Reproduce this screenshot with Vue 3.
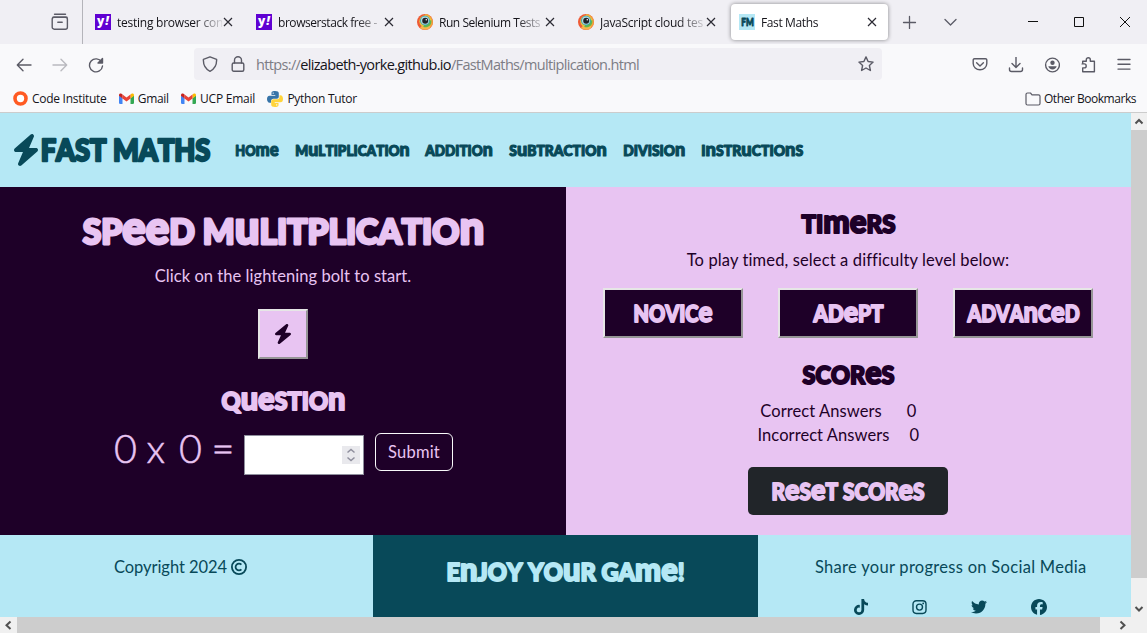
<script setup>
import { h } from 'vue'

// Spreads the letters of a label over the given width.
const vFit = {
  mounted(el, { value }) {
    const n = el.textContent.length
    const w = el.getBoundingClientRect().width
    el.style.letterSpacing = `${(value - w) / n}px`
  }
}

// Unicase headline: e, n, m and u keep their small shapes at capital height.
const Display = (props) => {
  const parts = props.text.match(/[enmu]+|[^enmu]+/g)
  const bleed = props.cap * 0.055
  return h(
    'svg',
    { class: 'display', width: props.w, height: props.cap, viewBox: `0 0 ${props.w} ${props.cap}` },
    [
      h(
        'text',
        {
          x: bleed / 2,
          y: props.cap - bleed / 2,
          textLength: props.w - bleed,
          lengthAdjust: 'spacingAndGlyphs',
          'stroke-width': props.cap * 0.105
        },
        parts.map((p) => {
          const small = /^[enmu]/.test(p)
          return h('tspan', { 'font-size': props.cap / (small ? 0.59 : 0.77) }, small ? p : p.toUpperCase())
        })
      )
    ]
  )
}
Display.props = ['text', 'w', 'cap']

const tabs = [
  { icon: 'yahoo', text: 'testing browser con', w: 106 },
  { icon: 'yahoo', text: 'browserstack free -', w: 99 },
  { icon: 'eye', text: 'Run Selenium Tests', w: 101 },
  { icon: 'eye', text: 'JavaScript cloud tes', w: 103 },
  { icon: 'fm', text: 'Fast Maths', w: 57, active: true }
]
const bookmarks = [
  { icon: 'code', text: 'Code Institute', w: 74.5 },
  { icon: 'gmail', text: 'Gmail', w: 31 },
  { icon: 'gmail', text: 'UCP Email', w: 55 },
  { icon: 'python', text: 'Python Tutor', w: 69.5 }
]
const nav = [
  { text: 'Home', w: 44 },
  { text: 'Multiplication', w: 115 },
  { text: 'Addition', w: 68 },
  { text: 'Subtraction', w: 98 },
  { text: 'Division', w: 62.5 },
  { text: 'Instructions', w: 102.5 }
]
const levels = [
  { text: 'Novice', w: 80 },
  { text: 'Adept', w: 71 },
  { text: 'Advanced', w: 113 }
]
const bolt =
  'M349.4 44.6c5.9-13.7 1.5-29.7-10.6-38.5s-28.6-8-39.9 1.8l-256 224c-10 8.8-13.6 22.9-8.9 35.3S50.7 288 64 288H175.5L98.6 467.4c-5.9 13.7-1.5 29.7 10.6 38.5s28.6 8 39.9-1.8l256-224c10-8.8 13.6-22.9 8.9-35.3s-16.6-20.7-30-20.7H272.5L349.4 44.6z'
</script>

<template>
  <div class="window">
    <div class="tabbar">
      <div class="view">
        <svg width="18" height="18" viewBox="0 0 18 18" class="line">
          <path d="M3.5 1.2h11" /><rect x="1.2" y="4.2" width="15.2" height="12" rx="2" /><path d="M2 4.2h14M6.800 9.200h4.400" />
        </svg>
      </div>
      <div v-for="(t, i) in tabs" :key="i" class="tab" :class="{ active: t.active }">
        <span v-if="t.icon === 'yahoo'" class="fav yahoo">y<i>!</i></span>
        <svg v-else-if="t.icon === 'eye'" class="fav" viewBox="0 0 16 16">
          <circle cx="8" cy="8" r="8" fill="#ef5a35" /><path d="M8 0a8 8 0 0 1 6 13L8 8z" fill="#f2a33a" /><path d="M3 14a8 8 0 0 0 11-1L8 8z" fill="#f7b64c" />
          <circle cx="8.3" cy="7.3" r="6" fill="#e5c341" /><path d="M8.3 7.3l6-1a6 6 0 0 1-8 6.6z" fill="#62b64d" />
          <circle cx="8" cy="6.6" r="4.9" fill="#38a5b4" /><circle cx="8" cy="6.6" r="4" fill="#b7dce2" /><circle cx="8.2" cy="6.8" r="3" fill="#20242a" /><circle cx="9.3" cy="5.8" r=".8" fill="#fff" />
        </svg>
        <span v-else class="fav fm"><Display text="FM" :w="13" :cap="9" /></span>
        <span class="tabtext"><span v-fit="t.w" class="fit">{{ t.text }}</span></span>
        <svg class="close" width="10" height="10" viewBox="0 0 10 10"><path d="M1 1l8 8M9 1l-8 8" /></svg>
      </div>
      <svg class="tabtools line" width="56" height="14" viewBox="0 0 56 14"><path d="M1.500 7.500h12M7.500 1.500v12M43 4.500l5.500 5.500 5.500-5.500" /></svg>
      <svg class="controls" width="104" height="14" viewBox="0 0 104 14"><path d="M1 6.500h10M47.500 2.500h9v9h-9zM93 2l10 10M103 2l-10 10" /></svg>
    </div>

    <div class="toolbar">
      <svg class="line" width="16" height="16" viewBox="0 0 16 16"><path d="M15 8H1.500M7 2.300L1.300 8 7 13.700" /></svg>
      <svg class="line dim" width="16" height="16" viewBox="0 0 16 16"><path d="M1 8h13.500M9 2.300L14.700 8 9 13.700" /></svg>
      <svg class="line" width="16" height="16" viewBox="0 0 16 16"><path d="M13.600 5A6.500 6.500 0 1 0 14.500 9" /><path d="M14.500 1.500v4.500H10z" fill="#5b5b66" /></svg>
      <div class="url">
        <svg class="line" width="16" height="16" viewBox="0 0 16 16"><path d="M8 .8l6.600 2.500c.3 5.600-1.700 9.600-6.600 12C3.100 12.900 1.100 8.900 1.400 3.300z" /></svg>
        <svg class="line" width="14" height="16" viewBox="0 0 14 16"><rect x="1.200" y="7" width="11.600" height="8.300" rx="1.500" /><path d="M3.500 7V4.200a3.500 3.500 0 0 1 7 0V7" /></svg>
        <span v-fit="383" class="fit address">https://<b>elizabeth-yorke.github.io</b>/FastMaths/multiplication.html</span>
        <svg class="line star" width="16" height="16" viewBox="0 0 16 16"><path d="M8 .9l2.100 4.600 5 .6-3.700 3.400 1 5L8 12l-4.400 2.500 1-5L.9 6.100l5-.6z" /></svg>
      </div>
      <div class="actions">
        <svg class="line" width="16" height="16" viewBox="0 0 16 16"><path d="M2.500 1.700h11a1.300 1.300 0 0 1 1.300 1.300V6.500a6.800 6.300 0 0 1-13.600 0V3a1.300 1.300 0 0 1 1.300-1.300zM4.600 5.800L8 9.100l3.400-3.300" /></svg>
        <svg class="line" width="16" height="16" viewBox="0 0 16 16"><path d="M8 0v10.300M4 6.500l4 4 4-4M1.500 11v1.500a2 2 0 0 0 2 2h9a2 2 0 0 0 2-2V11" /></svg>
        <svg class="line" width="16" height="16" viewBox="0 0 16 16"><circle cx="8.500" cy="8" r="6.900" /><circle cx="8.500" cy="5.700" r="2.200" class="solid" /><path d="M4.300 9.300h8.400c-.4 2-2.200 3.100-4.200 3.100s-3.800-1.100-4.200-3.100z" class="solid" /></svg>
        <svg class="line" width="16" height="16" viewBox="0 0 16 16"><path d="M2.700 6V4.300h3.600V2.700a2 2 0 0 1 4 0v1.600h4.100v10.400H2.700v-3.800h1.500a2 2 0 0 0 0-4H2.100" /></svg>
        <svg class="line" width="16" height="16" viewBox="0 0 16 16"><path d="M2 2.500h12M2 7.300h12M2 12.100h12" /></svg>
      </div>
    </div>

    <div class="bookmarks">
      <div v-for="b in bookmarks" :key="b.text" class="bookmark">
        <svg v-if="b.icon === 'code'" width="15" height="15" viewBox="0 0 15 15"><circle cx="7.500" cy="7.500" r="5.500" fill="#fff" stroke="#ff5a22" stroke-width="3.600" /></svg>
        <svg v-else-if="b.icon === 'gmail'" width="15" height="12" viewBox="0 0 15 12">
          <path d="M0 2.500l3.500 2.600V11H1.200A1.200 1.200 0 0 1 0 9.800z" fill="#4285f4" /><path d="M11.500 5.100L15 2.500v7.300a1.200 1.200 0 0 1-1.200 1.200h-2.300z" fill="#34a853" />
          <path d="M11.500 1.500l1-.7c1.200-.8 2.500 0 2.500 1.200v.8l-3.500 2.600z" fill="#fbbc04" /><path d="M3.500 5.500v-4l4 3 4-3v4l-4 3z" fill="#ea4335" /><path d="M0 2.800V2C0 .800 1.300 0 2.500.800l1 .7v4z" fill="#c5221f" />
        </svg>
        <svg v-else width="16" height="16" viewBox="0 0 16 16">
          <path d="M8 0C4.500 0 4.500 1 4.500 2.500V4H8.300v.7H2.500C.8 4.700 0 6 0 8s1 3.700 2.500 3.700H4V10c0-1.300 1-2.300 2.300-2.300h3.500c1.200 0 2-.9 2-2V2.500C11.800.7 10.500 0 8 0z" fill="#3774a8" />
          <path d="M8 16c3.500 0 3.500-1 3.500-2.500V12H7.700v-.7h5.800c1.700 0 2.500-1.300 2.500-3.300s-1-3.700-2.500-3.700H12.500V6c0 1.300-1 2.300-2.300 2.300H6.500c-1.200 0-2.300.9-2.300 2v3.200C4.200 15.300 5.500 16 8 16z" fill="#ffd43b" />
          <circle cx="6.200" cy="2.100" r=".7" fill="#fff" /><circle cx="9.700" cy="13.900" r=".7" fill="#fff" />
        </svg>
        <span v-fit="b.w" class="fit">{{ b.text }}</span>
      </div>
      <div class="bookmark other">
        <svg class="line thin" width="16" height="14" viewBox="0 0 16 14"><path d="M1 11.500v-9A1.500 1.500 0 0 1 2.500 1h3L7 2.800h6.500A1.500 1.500 0 0 1 15 4.300v7.200a1.500 1.500 0 0 1-1.500 1.500h-11A1.500 1.500 0 0 1 1 11.500z" /></svg>
        <span v-fit="92" class="fit">Other Bookmarks</span>
      </div>
    </div>

    <div class="viewport">
      <div class="page">
        <header>
          <svg class="logo" width="24" height="32" viewBox="32 0 384 512" preserveAspectRatio="none"><path :d="bolt" /></svg>
          <Display text="FAST MATHS" :w="171" :cap="23" />
          <nav><a v-for="n in nav" :key="n.text"><Display :text="n.text" :w="n.w" :cap="11" /></a></nav>
        </header>

        <main>
          <section class="game">
            <h1><Display text="Speed Mulitplication" :w="403" :cap="27" /></h1>
            <p><span v-fit="256.500" class="fit">Click on the lightening bolt to start.</span></p>
            <button class="start"><svg width="16" height="20" viewBox="32 0 384 512" preserveAspectRatio="none"><path :d="bolt" /></svg></button>
            <h2><Display text="Question" :w="125" :cap="19.500" /></h2>
            <div class="answer">
              <span class="sum"><i>0</i><i>x</i><i>0</i><i>=</i></span>
              <div class="input">
                <span class="spin"><svg width="10" height="14" viewBox="0 0 10 14"><path d="M1.500 4.500L5 1.500l3.500 3M1.500 9.500l3.500 3 3.500-3" /></svg></span>
              </div>
              <button class="submit"><span v-fit="52" class="fit">Submit</span></button>
            </div>
          </section>

          <section class="side">
            <h2><Display text="Timers" :w="95" :cap="19.500" /></h2>
            <p><span v-fit="322" class="fit">To play timed, select a difficulty level below:</span></p>
            <div class="levels">
              <button v-for="l in levels" :key="l.text"><Display :text="l.text" :w="l.w" :cap="17" /></button>
            </div>
            <h2 class="scores"><Display text="Scores" :w="93" :cap="19.500" /></h2>
            <div class="score first"><span v-fit="121.500" class="fit">Correct Answers</span><span class="wide">0</span></div>
            <div class="score"><span v-fit="132" class="fit">Incorrect Answers</span><span class="narrow">0</span></div>
            <button class="reset"><Display text="Reset Scores" :w="154" :cap="17" /></button>
          </section>
        </main>

        <footer>
          <div class="copy">
            <span v-fit="113" class="fit">Copyright 2024</span>
            <svg width="16" height="16" viewBox="0 0 16 16"><path d="M10.400 5.600a3.400 3.400 0 1 0 0 4.800" /><circle cx="8" cy="8" r="7.100" /></svg>
          </div>
          <div class="enjoy"><Display text="Enjoy your game!" :w="239" :cap="19.500" /></div>
          <div class="share">
            <span v-fit="271.500" class="fit">Share your progress on Social Media</span>
            <div class="social">
              <svg width="14" height="16" viewBox="0 0 448 512"><path d="M448 209.900a210.100 210.100 0 0 1-122.800-39.300V349.400A162.600 162.600 0 1 1 185 188.300V278.200a74.600 74.600 0 1 0 52.200 71.200V0l88 0a121.200 121.200 0 0 0 1.900 22.200 122.200 122.200 0 0 0 53.900 80.200 121.400 121.400 0 0 0 67 20.100z" /></svg>
              <svg width="15" height="16" viewBox="0 0 15 16"><rect x="1" y="1.700" width="13" height="12.800" rx="3.400" fill="none" stroke="#084959" stroke-width="1.400" /><circle cx="7.500" cy="8.100" r="3" fill="none" stroke="#084959" stroke-width="1.400" /><circle cx="11.200" cy="4.400" r=".9" /></svg>
              <svg width="16" height="16" viewBox="0 0 512 512"><path d="M459.400 151.700c.3 4.500.3 9.100.3 13.600 0 138.700-105.600 298.600-298.600 298.600-59.500 0-114.700-17.200-161.100-47.100 8.400 1 16.600 1.300 25.300 1.300 49.100 0 94.200-16.600 130.300-44.800-46.100-1-84.800-31.200-98.100-72.800 6.500 1 13 1.600 19.800 1.600 9.400 0 18.800-1.300 27.600-3.600-48.100-9.700-84.100-52-84.100-103v-1.300c14 7.800 30.200 12.700 47.400 13.300-28.300-18.800-46.800-51-46.800-87.400 0-19.500 5.200-37.400 14.300-53 51.700 63.700 129.300 105.300 216.400 109.800-1.600-7.800-2.600-15.900-2.600-24 0-57.800 46.800-104.900 104.900-104.900 30.200 0 57.500 12.700 76.700 33.100 23.700-4.500 46.500-13.300 66.600-25.300-7.800 24.400-24.400 44.800-46.100 57.800 21.100-2.300 41.600-8.100 60.400-16.200-14.300 20.800-32.200 39.300-52.600 54.300z" /></svg>
              <svg width="16" height="16" viewBox="0 0 512 512"><path d="M512 256C512 114.600 397.400 0 256 0S0 114.600 0 256c0 120 82.700 220.800 194.200 248.500V334.200h-52.800V256h52.800v-33.700c0-87.100 39.400-127.500 125-127.500 16.200 0 44.200 3.200 55.700 6.400v70.800c-6-.6-16.500-1-29.600-1-42 0-58.200 15.900-58.200 57.200V256h83.600l-14.400 78.200h-69.300v175.900C413.800 494.800 512 386.900 512 256z" /></svg>
            </div>
          </div>
        </footer>
      </div>

      <div class="vscroll">
        <svg width="16" height="17" viewBox="0 0 16 17"><path d="M4.500 10.500L8 7l3.500 3.500" /></svg>
        <div class="thumb"></div>
        <svg width="16" height="17" viewBox="0 0 16 17"><path d="M4.500 7L8 10.500 11.500 7" /></svg>
      </div>
    </div>
    <div class="hscroll">
      <svg width="17" height="16" viewBox="0 0 17 16"><path d="M10.500 4.500L6.500 8.300l4 3.700" /></svg>
      <div class="thumb"></div>
      <svg width="17" height="16" viewBox="0 0 17 16"><path d="M6.500 4.500l4 3.800-4 3.700" /></svg>
    </div>
  </div>
</template>

<style>
body { background: #fff; overflow: hidden; }
.display { display: block; overflow: visible; flex: none; fill: currentColor; }
.display text {
  font-family: Lato, "Open Sans", sans-serif;
  font-weight: 900;
  font-kerning: none;
  stroke: currentColor;
  stroke-linejoin: round;
}
</style>

<style scoped>
* { box-sizing: border-box; }
.window { width: 1147px; height: 633px; display: flex; flex-direction: column; font-family: "Open Sans", "Noto Sans", sans-serif; font-size: 12px; color: #15141a; }
.fit { display: inline-block; white-space: nowrap; }
svg { flex: none; display: block; }
.line { fill: none; stroke: #5b5b66; stroke-width: 1.400; stroke-linecap: round; stroke-linejoin: round; }
.line.thin { stroke-width: 1.200; }
.solid { fill: #5b5b66; stroke: none; }
.dim { opacity: .4; }

.tabbar { height: 44px; background: #f0eff4; display: flex; align-items: center; }
.view { width: 83px; height: 44px; border-right: 1px solid #b4b4ba; padding: 13px 0 0 51px; margin-right: 4px; }
.tab { width: 157px; height: 36px; margin-right: 4px; padding-left: 8px; display: flex; align-items: center; border-radius: 4px; }
.tab.active { background: #fff; box-shadow: 0 0 4px rgba(0, 0, 0, .45); }
.fav { width: 16px; height: 16px; flex: none; }
.yahoo { background: #6001d2; color: #fff; font-weight: 800; font-size: 12px; line-height: 13px; padding-left: 2px; white-space: nowrap; }
.yahoo i { margin-left: 1px; }
.fm { background: #b5e8f5; color: #084959; padding: 3px 0 0 1.500px; }
.tabtext { width: 105px; margin-left: 6px; overflow: hidden; padding-top: 1px; mask-image: linear-gradient(to right, #000 78px, rgba(0, 0, 0, .15) 104px); }
.close { margin-left: 1px; fill: none; stroke: #2b2a33; stroke-width: 1.200; }
.tabtools { margin-left: 10px; stroke-width: 1.300; }
.controls { margin-left: 69px; fill: none; stroke: #111; stroke-width: 1; }

.toolbar { height: 40px; background: #f9f9fb; display: flex; align-items: center; gap: 20px; padding: 1px 15px 0 16px; }
.url { width: 688px; height: 32px; margin: -2px 0 0 70px; background: #f0eff4; border-radius: 4px; display: flex; align-items: center; padding: 0 8px; }
.url .line:nth-child(2) { margin-left: 13px; }
.address { margin-left: 11px; font-size: 14.500px; line-height: 20px; color: #7d7d85; padding-top: 3px; }
.address b { font-weight: 400; color: #15141a; }
.star { margin-left: auto; }
.actions { margin-left: auto; display: flex; gap: 20px; }

.bookmarks { height: 29px; background: #f9f9fb; border-bottom: 1px solid #ccc; display: flex; align-items: center; gap: 12.300px; padding: 1px 11px 0 13px; }
.bookmark { display: flex; align-items: center; gap: 4px; }
.other { margin-left: auto; gap: 3.500px; }

.viewport { height: 504px; display: flex; }
.page { width: 1131px; font-family: Lato, "Open Sans", sans-serif; font-size: 16.500px; line-height: 24px; }
header { height: 74px; background: #b5e8f5; color: #084959; display: flex; align-items: center; padding-left: 14px; }
.logo { fill: #084959; margin-right: 2px; }
nav { display: flex; gap: 15.700px; margin-left: 24px; }
main { display: flex; height: 348px; }
h1, h2, p { margin: 0; }
section { display: flex; flex-direction: column; align-items: center; }
.game { width: 566px; background: #1e0028; color: #e8c4f2; padding-top: 31px; }
.game p { margin-top: 19px; height: 24px; }
.start { width: 50px; height: 50px; margin-top: 21px; padding: 0; background: #e8c4f2; border: 2px solid; border-color: #e6e6e6 #969696 #969696 #e6e6e6; display: flex; align-items: center; justify-content: center; }
.start svg { fill: #1e0028; }
.game h2 { margin-top: 32px; }
.answer { display: flex; margin: 22px 0 0 1px; width: 339px; }
.sum { width: 130px; height: 40px; display: flex; font-size: 39.500px; line-height: 30px; font-weight: 300; -webkit-text-stroke: .5px currentColor; }
.sum i { font-style: normal; width: 33px; }
.input { width: 120px; height: 40px; margin-top: 2px; background: #fff; border: 1px solid #8f8f9d; display: flex; align-items: center; justify-content: flex-end; padding-right: 3px; }
.spin { width: 18px; height: 18px; background: #e9e9ed; display: flex; align-items: center; justify-content: center; }
.spin svg { fill: none; stroke: #8f8f9d; stroke-width: 1.500; }
.submit { width: 78px; height: 38px; margin-left: 11px; padding: 0; border: 1px solid #f8f9fa; border-radius: 6px; background: none; color: #e8c4f2; font: 16.500px Lato, sans-serif; }
.side { width: 565px; background: #e8c4f2; color: #1e0028; padding: 27px 1px 0 0; }
.side p { margin-top: 14px; height: 24px; }
.levels { display: flex; gap: 35px; margin-top: 16px; }
.levels button { width: 140px; height: 50px; padding: 1px 0 0; background: #1e0028; color: #e8c4f2; border: 2px solid; border-color: #e6e6e6 #969696 #969696 #e6e6e6; display: flex; align-items: center; justify-content: center; }
.scores { margin: 27px 0 15px; }
.score { height: 24px; display: flex; margin-left: -20px; }
.wide { width: 9px; margin-left: 25px; }
.narrow { width: 9px; margin-left: 20px; }
.reset { width: 200px; height: 48px; margin-top: 20px; padding: 1px 0 0; border: 0; border-radius: 5px; background: #212529; color: #e8c4f2; display: flex; align-items: center; justify-content: center; }
footer { display: flex; height: 82px; background: #b5e8f5; color: #084959; overflow: hidden; }
.copy { width: 373px; padding: 20px 0 0 114px; display: flex; gap: 4px; }
.copy svg { margin-top: 4px; fill: none; stroke: #084959; stroke-width: 1.800; }
.enjoy { width: 385px; background: #084959; color: #b5e8f5; padding: 27px 0 0 73px; }
.share { width: 373px; padding: 20px 0 0 57px; }
.social { display: flex; margin: 20px 0 0 39px; gap: 44px; fill: #084959; }

.vscroll { width: 16px; background: #f0f0f0; display: flex; flex-direction: column; }
.vscroll .thumb { height: 448px; margin-bottom: 22px; background: #cdcdcd; }
.hscroll { height: 16px; background: #f0f0f0; display: flex; }
.hscroll .thumb { width: 1083px; margin-right: 14px; background: #cdcdcd; }
.vscroll svg, .hscroll svg { fill: none; stroke: #505050; stroke-width: 2; }
</style>
